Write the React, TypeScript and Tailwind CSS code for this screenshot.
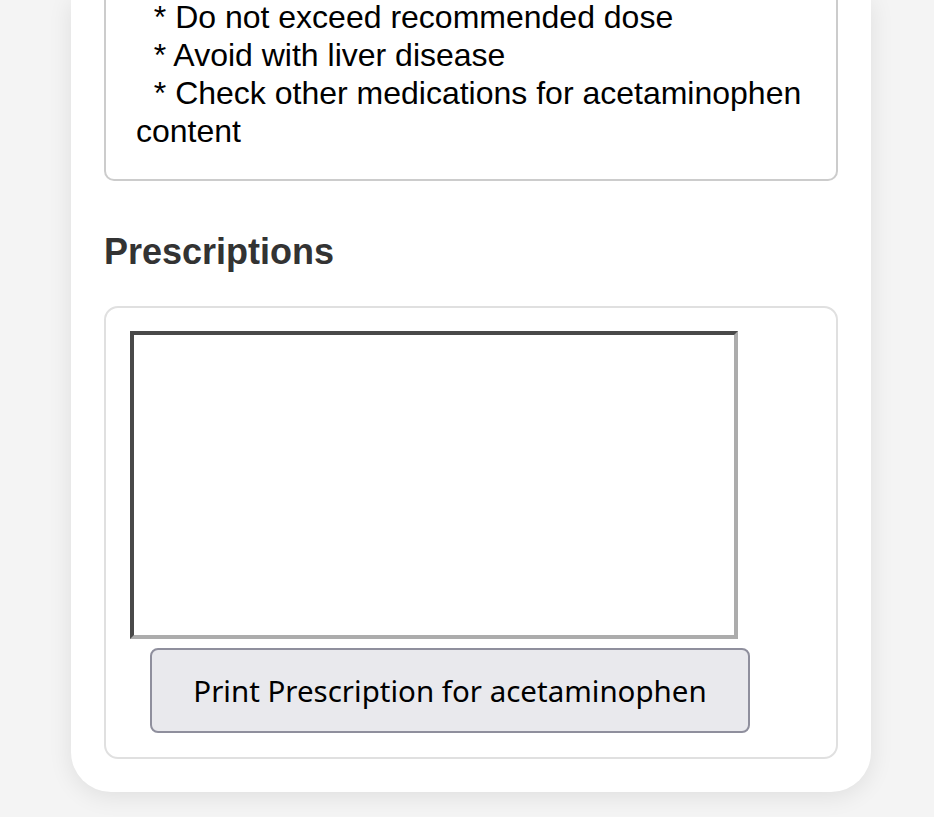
import React from "react";

export default function App() {
  const warnings = "  * Do not exceed recommended dose\n  * Avoid with liver disease\n  * Check other medications for acetaminophen content";
  return (
    <div className="min-h-screen bg-[#f4f4f4] pb-[25px] overflow-hidden" style={{ fontFamily: '"Liberation Sans", Arial, sans-serif' }}>
      <div className="ml-[71px] w-[800px] bg-white rounded-b-[40px] shadow-[0_4px_24px_rgba(0,0,0,0.09)] px-[33px] pb-[33px]">
        <div className="-mt-[2px] border-2 border-t-0 border-[#cccccc] rounded-b-[10px] pl-[30px] pr-[30px] pb-[29px]">
          <div className="whitespace-pre-wrap text-[32px] leading-[38px] text-black">{warnings}</div>
        </div>
        <h3 className="mt-[50px] mb-[33px] text-[36px] leading-[42px] font-bold text-[#333333]">Prescriptions</h3>
        <div className="border-2 border-[#e0e0e0] rounded-[14px] px-[24px] pt-[23px] pb-[24px]">
          <div className="w-[608px] h-[308px] bg-white border-4 border-t-[#494949] border-l-[#494949] border-b-[#acacac] border-r-[#acacac]" />
          <button
            className="mt-[9px] ml-[20px] w-[600px] h-[85px] pt-[2px] bg-[#e9e9ed] border-2 border-[#8f8f9d] rounded-[8px] text-[29.5px] text-black"
            style={{ fontFamily: '"Noto Sans", "DejaVu Sans", sans-serif' }}
          >
            Print Prescription for acetaminophen
          </button>
        </div>
      </div>
    </div>
  );
}
